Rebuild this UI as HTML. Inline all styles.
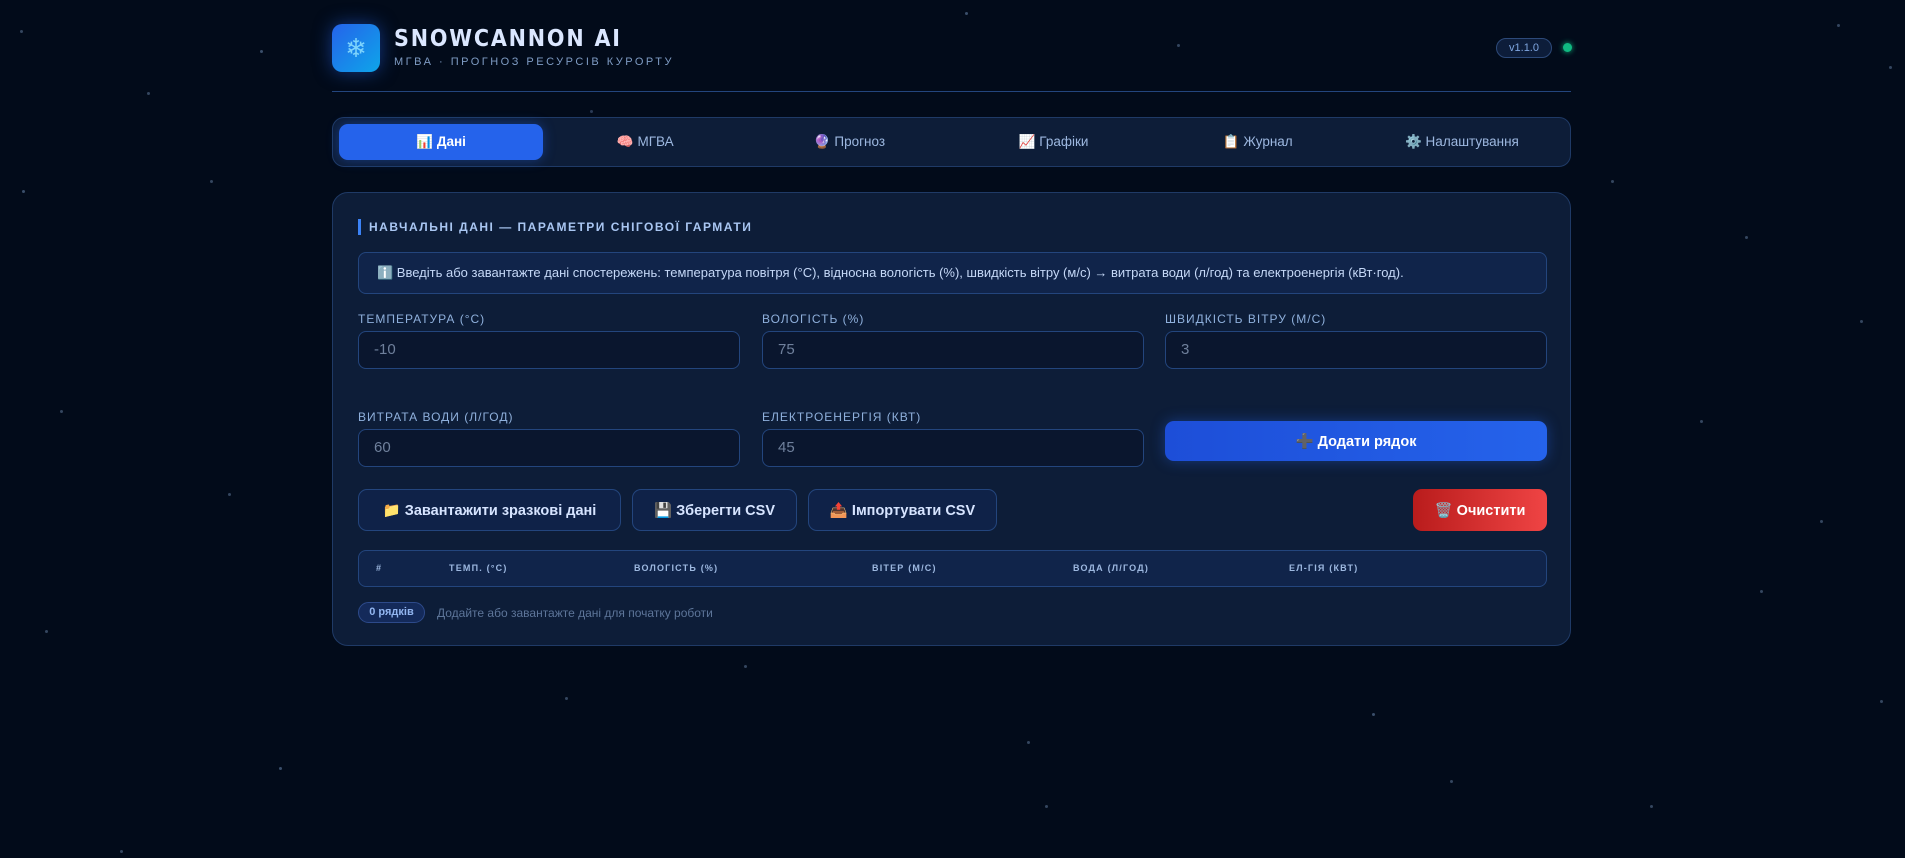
<!DOCTYPE html>
<html><head><meta charset="utf-8"><style>
*{box-sizing:border-box;margin:0;padding:0}
body{width:1905px;height:858px;overflow:hidden;background:#020b1a;font-family:"Liberation Sans","Noto Sans CJK SC",sans-serif;color:#cfe0ff;position:relative}
.stars{position:absolute;left:0;top:0;width:3px;height:3px;border-radius:50%;background:transparent;
box-shadow:20px 30px #34465f,260px 50px #3a4e6a,147px 92px #34465f,210px 180px #34465f,22px 190px #3a4e6a,965px 12px #3a4e6a,1177px 44px #34465f,1543px 210px #3a4e6a,1837px 24px #34465f,1889px 66px #34465f,1611px 180px #34465f,1745px 236px #34465f,1860px 320px #34465f,228px 493px #34465f,45px 630px #34465f,744px 665px #34465f,565px 697px #34465f,1372px 713px #3a4e6a,1045px 805px #34465f,279px 767px #3a4e6a,1027px 741px #34465f,1650px 805px #34465f,1760px 590px #34465f,1880px 700px #34465f,120px 850px #34465f,1450px 780px #34465f,1700px 420px #34465f,60px 410px #34465f,1820px 520px #34465f,1000px 200px #2a3a55,1350px 120px #2a3a55,590px 110px #2a3a55;}
.wrap{position:absolute;left:332px;width:1239px;top:0}
.logo{position:absolute;left:0;top:24px;width:48px;height:48px;border-radius:10px;background:linear-gradient(135deg,#2563eb,#0ea5e9);box-shadow:0 0 18px rgba(37,99,235,.5);display:flex;align-items:center;justify-content:center;font-size:26px;color:#7dd3fc}
.title{position:absolute;left:62px;top:26px;font-size:23px;letter-spacing:2px;color:#dbe7ff;font-weight:bold;font-family:"DejaVu Sans","Liberation Sans",sans-serif;transform:scaleX(0.9);transform-origin:left}
.sub{position:absolute;left:62px;top:56px;font-size:11px;letter-spacing:2.5px;color:#7f9cc4}
.ver{position:absolute;left:1164px;top:38px;width:56px;height:20px;border:1px solid #2d4a7a;border-radius:10px;background:#0d1d3a;color:#7fa6e0;font-size:11px;text-align:center;line-height:18px}
.dot{position:absolute;left:1231px;top:43px;width:9px;height:9px;border-radius:50%;background:#10b981;box-shadow:0 0 6px #10b981}
.hr{position:absolute;left:0;top:91px;width:1239px;height:1px;background:#23457d}
.nav{position:absolute;left:0;top:117px;width:1239px;height:50px;border:1px solid #1f3a66;border-radius:12px;background:#0d1d38;display:flex;padding:6px}
.nav div{flex:1;display:flex;align-items:center;justify-content:center;font-size:13.5px;color:#9db8e0;border-radius:9px}
.nav .a{background:#2563eb;color:#fff;font-weight:bold;box-shadow:0 0 12px rgba(37,99,235,.4)}
.card{position:absolute;left:0;top:192px;width:1239px;height:454px;border:1px solid #1f3a66;border-radius:16px;background:#0d1d38;padding:0 25px}
.h{position:absolute;left:25px;top:26px;border-left:3px solid #3b82f6;padding-left:8px;font-size:12px;font-weight:bold;letter-spacing:1.5px;color:#a9c6f2;line-height:16px}
.info{position:absolute;left:25px;top:59px;width:1189px;height:42px;border:1px solid #23457d;border-radius:8px;background:#10244a;font-size:13px;color:#c5d8f7;line-height:40px;padding-left:18px}
.lbl{position:absolute;font-size:12px;letter-spacing:1px;color:#8fb0dc}
.inp{position:absolute;height:38px;border:1px solid #23457d;border-radius:8px;background:#0a162e;color:#6f809c;font-size:15px;line-height:36px;padding-left:15px}
.btn{position:absolute;top:296px;height:42px;border:1px solid #23457d;border-radius:9px;background:#0f2248;color:#d6e4ff;font-weight:bold;font-size:14.5px;display:flex;align-items:center;justify-content:center}
.add{position:absolute;left:832px;top:228px;width:382px;height:40px;border-radius:9px;background:linear-gradient(90deg,#1d4ed8,#2563eb);color:#fff;font-weight:bold;font-size:14.5px;display:flex;align-items:center;justify-content:center;box-shadow:0 0 14px rgba(37,99,235,.4)}
.clr{left:1080px;width:134px;background:linear-gradient(90deg,#b91c1c,#ef4444);border:none;color:#fff}
.tbl{position:absolute;left:25px;top:357px;width:1189px;height:37px;border:1px solid #23457d;border-radius:8px;background:#10244a}
.tbl span{position:absolute;top:12px;font-size:9px;font-weight:bold;letter-spacing:1.2px;color:#9db8e0}
.pill{position:absolute;left:25px;top:409px;width:67px;height:21px;border:1px solid #2d4a8a;border-radius:11px;background:#142a5a;color:#93b6f0;font-size:11px;font-weight:bold;text-align:center;line-height:19px}
.ft{position:absolute;left:104px;top:413px;font-size:12px;color:#5d7599}
</style></head><body>
<div class="stars"></div>
<div class="wrap">
<div class="logo">❄</div>
<div class="title">SNOWCANNON AI</div>
<div class="sub">МГВА · ПРОГНОЗ РЕСУРСІВ КУРОРТУ</div>
<div class="ver">v1.1.0</div>
<div class="dot"></div>
<div class="hr"></div>
<div class="nav"><div class="a">📊 Дані</div><div>🧠 МГВА</div><div>🔮 Прогноз</div><div>📈 Графіки</div><div>📋 Журнал</div><div>⚙️ Налаштування</div></div>
<div class="card">
<div class="h">НАВЧАЛЬНІ ДАНІ — ПАРАМЕТРИ СНІГОВОЇ ГАРМАТИ</div>
<div class="info">ℹ️ Введіть або завантажте дані спостережень: температура повітря (°C), відносна вологість (%), швидкість вітру (м/с) → витрата води (л/год) та електроенергія (кВт·год).</div>
<div class="lbl" style="left:25px;top:119px">ТЕМПЕРАТУРА (°C)</div>
<div class="lbl" style="left:429px;top:119px">ВОЛОГІСТЬ (%)</div>
<div class="lbl" style="left:832px;top:119px">ШВИДКІСТЬ ВІТРУ (М/С)</div>
<div class="inp" style="left:25px;top:138px;width:382px">-10</div>
<div class="inp" style="left:429px;top:138px;width:382px">75</div>
<div class="inp" style="left:832px;top:138px;width:382px">3</div>
<div class="lbl" style="left:25px;top:217px">ВИТРАТА ВОДИ (Л/ГОД)</div>
<div class="lbl" style="left:429px;top:217px">ЕЛЕКТРОЕНЕРГІЯ (КВТ)</div>
<div class="inp" style="left:25px;top:236px;width:382px">60</div>
<div class="inp" style="left:429px;top:236px;width:382px">45</div>
<div class="add">➕ Додати рядок</div>
<div class="btn" style="left:25px;width:263px">📁 Завантажити зразкові дані</div>
<div class="btn" style="left:299px;width:165px">💾 Зберегти CSV</div>
<div class="btn" style="left:475px;width:189px">📤 Імпортувати CSV</div>
<div class="btn clr">🗑️ Очистити</div>
<div class="tbl"><span style="left:17px">#</span><span style="left:90px">ТЕМП. (°C)</span><span style="left:275px">ВОЛОГІСТЬ (%)</span><span style="left:513px">ВІТЕР (М/С)</span><span style="left:714px">ВОДА (Л/ГОД)</span><span style="left:930px">ЕЛ-ГІЯ (КВТ)</span></div>
<div class="pill">0 рядків</div>
<div class="ft">Додайте або завантажте дані для початку роботи</div>
</div>
</div>
</body></html>
